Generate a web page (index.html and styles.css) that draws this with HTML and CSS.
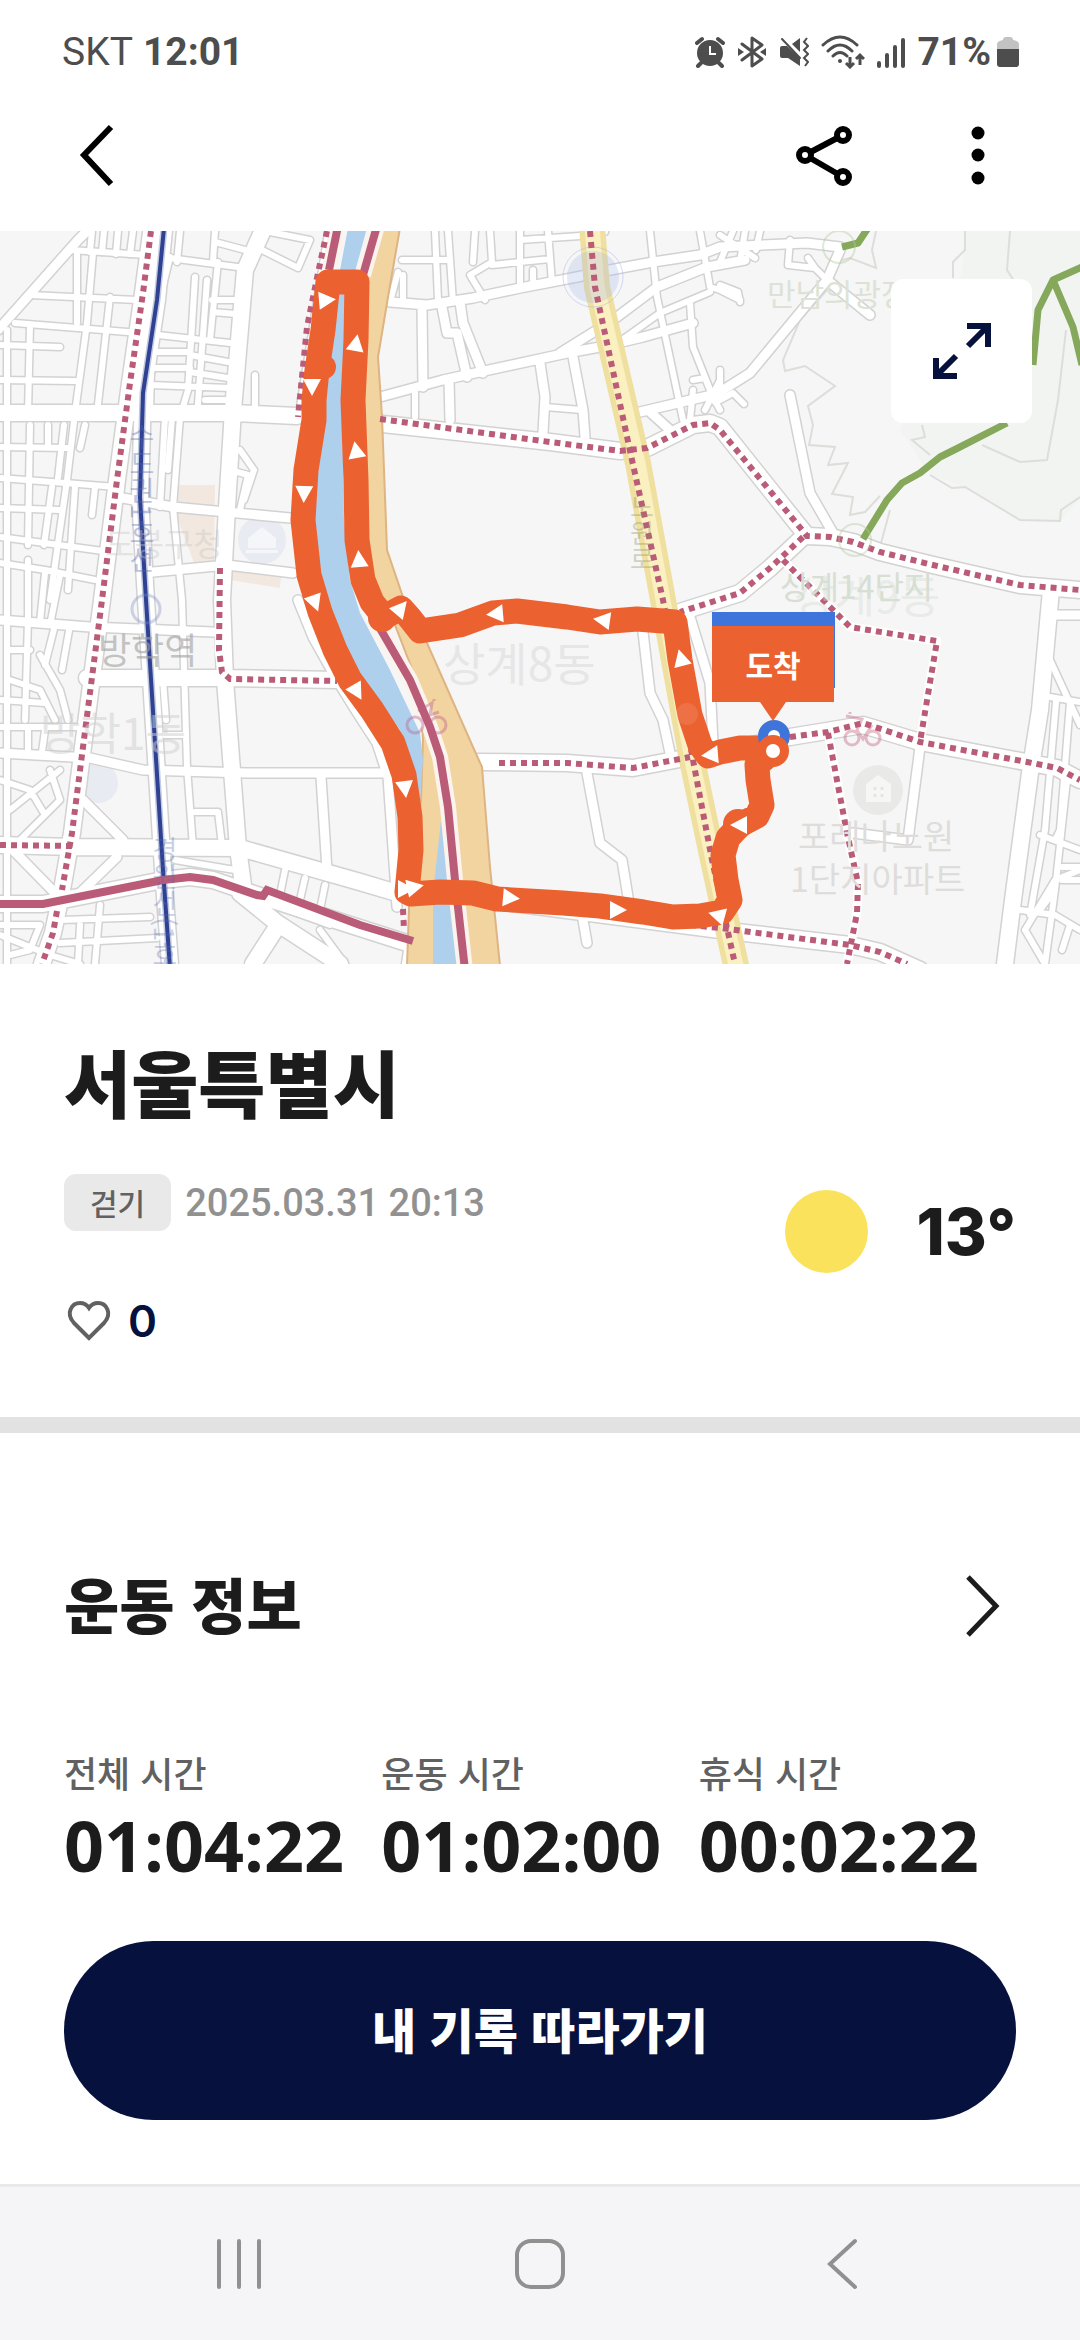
FILE: index.html
```html
<!DOCTYPE html>
<html lang="ko">
<head>
<meta charset="utf-8">
<meta name="viewport" content="width=device-width, initial-scale=1">
<title>서울특별시</title>
<link rel="stylesheet" href="styles.css">
</head>
<body>
<div class="screen">
  <div class="status-bar">
    <div class="status-left"><span class="carrier">SKT</span><span class="clock">12:01</span></div>
    <div class="status-right">
      <svg class="status-icon" width="30" height="32" viewBox="0 0 30 32" aria-label="알람">
        <circle cx="15" cy="17" r="13" fill="#4d4d4d"/>
        <path d="M2 7L7 3M28 7L23 3M6 27L3 30M24 27L27 30" stroke="#4d4d4d" stroke-width="4" stroke-linecap="round"/>
        <path d="M15 10V18H21" fill="none" stroke="#fff" stroke-width="2"/>
      </svg>
      <svg class="status-icon" width="30" height="32" viewBox="0 0 30 32" aria-label="블루투스">
        <path d="M5 8L25 23L15 30V2L25 9L5 24" fill="none" stroke="#4d4d4d" stroke-width="3" stroke-linejoin="round" stroke-linecap="round"/>
        <path d="M1 12L7 16L1 20ZM29 12L23 16L29 20Z" fill="#4d4d4d"/>
      </svg>
      <svg class="status-icon" width="30" height="32" viewBox="0 0 30 32" aria-label="진동">
        <path d="M1 12Q1 10 3 10H8L21 22V30L9 22H3Q1 22 1 20ZM13 8L21 2V16Z" fill="#4d4d4d"/>
        <path d="M3 3L21 22" stroke="#4d4d4d" stroke-width="2" stroke-linecap="round"/>
        <path d="M28 2L25 6L29 10L25 14L29 18L25 22L29 26L26 30" fill="none" stroke="#4d4d4d" stroke-width="2"/>
      </svg>
      <svg class="status-icon" width="44" height="34" viewBox="0 0 44 34" aria-label="와이파이">
        <path d="M2 10Q19 -6 36 10M7 16Q19 4 31 16M12 21Q19 14 26 21" fill="none" stroke="#4d4d4d" stroke-width="3" stroke-linecap="round"/>
        <circle cx="19" cy="26" r="2" fill="#4d4d4d"/>
        <path d="M29 22V32M25 28L29 32L33 28M39 30V20M35 24L39 20L43 24" fill="none" stroke="#4d4d4d" stroke-width="3"/>
      </svg>
      <svg class="status-icon" width="28" height="32" viewBox="0 0 28 32" aria-label="신호 세기">
        <path d="M2 27V30M10 19V30M18 11V30M26 4V30" stroke="#4d4d4d" stroke-width="4" stroke-linecap="round"/>
      </svg>
      <span class="battery-level">71%</span>
      <svg class="battery-icon" width="22" height="30" viewBox="0 0 22 30" aria-label="배터리">
        <path d="M6 3Q6 0 9 0H13Q16 0 16 3Q22 4 22 7V12H0V7Q0 4 6 3Z" fill="#c2c2c2"/>
        <path d="M0 12H22V27Q22 30 19 30H3Q0 30 0 27Z" fill="#4d4d4d"/>
      </svg>
    </div>
  </div>

  <header class="app-bar">
    <button class="icon-button" type="button" aria-label="뒤로">
      <svg width="64" height="64" viewBox="0 0 64 64"><path d="M47 4L20 32L47 61" fill="none" stroke="#000" stroke-width="6"/></svg>
    </button>
    <div class="app-actions">
      <button class="icon-button" type="button" aria-label="공유">
        <svg width="64" height="64" viewBox="0 0 64 64" fill="#fff" stroke="#000" stroke-width="6"><path d="M13 32L51 12M13 32L51 54"/><circle cx="13" cy="32" r="6"/><circle cx="51" cy="12" r="6"/><circle cx="51" cy="54" r="6"/></svg>
      </button>
      <button class="icon-button" type="button" aria-label="더보기">
        <svg width="64" height="64" viewBox="0 0 64 64"><circle cx="32" cy="10" r="6.500"/><circle cx="32" cy="32" r="6.500"/><circle cx="32" cy="55" r="6.500"/></svg>
      </button>
    </div>
  </header>

  <main>
    <section class="map" aria-label="이동 경로 지도">
      <svg class="map-canvas" viewBox="0 231 1080 733" preserveAspectRatio="xMidYMid slice">
        <defs>
          <g id="lanes">
            <path d="M0 345L60 347M15 323L140 333L230 343M30 295L137 300M70 250L147 255L245 268M0 380L75 381M0 447L67 448M0 478L117 487M0 508L60 510M0 537L103 551M0 563L45 570L95 580M0 700L45 703M0 727L80 727M0 752L60 756"/>
            <path d="M7 330V964M77 253L77 323M93 253L87 323L75 413L67 480L50 600M110 297L97 413M30 325L28 413M30 425L28 545M48 425V447M64 425L58 478M85 425L80 448M52 487L44 545M75 487L68 590M95 487L92 515M28 560V620M45 573L40 622M60 575L50 625"/>
            <path d="M195 277L188 390L180 417L173 507L182 600L187 767L193 847M207 280L197 417M218 262L210 340M170 257L152 330L150 413M152 352H190M152 368H190M190 355L228 362M190 372L228 378M150 385L230 388M205 400H226M165 417L160 507M172 417L168 470M92 231L90 252M104 231L102 252M118 231L116 254M133 231L130 254M180 231L177 262M215 231L213 262M215 242L245 250M212 300H238M213 312L236 314"/>
            <path d="M265 231L310 240L298 268L262 250M232 413L230 470L248 475L240 510M240 450L254 470L244 500M255 375V413M28 620L25 720M40 655L60 690L68 720M10 680L40 690L55 720M55 625L45 665M70 625L62 670M10 650H30M28 730V752M45 730L42 752M0 780L30 790L45 815L20 840M10 810L60 770M30 830L60 800L50 770"/>
            <path d="M165 735H182M163 680L166 720M195 812H218L222 845M175 860L235 870M285 870L280 895M305 878L300 900M325 885L320 910M0 925H40L30 950L10 955M60 943L157 938M62 920L150 917M100 905L95 964M80 925L78 964M0 935L50 955L80 964M320 930L345 964M275 905L330 925"/>
            <path d="M402 260H447M435 231L438 300M448 231L453 302M398 272L390 302M403 275V302M475 231L473 262M490 231L492 262L470 275L485 300M520 231V287M548 231L552 283M492 265L550 259M520 240L580 236M533 280V270M600 231L605 232"/>
            <path d="M650 231L657 297L683 420M700 231L710 287L720 290L740 300M622 340L660 313L710 292M690 303L693 347L713 397L720 410M693 390L690 420M693 380L705 378L715 402M720 380L705 410M733 231L720 262M745 231L740 262M760 231L756 250M720 235L755 258M790 240L788 265L815 268L827 280M808 258L815 268M720 285L738 292L740 302M720 370V400M720 400L733 393L744 404"/>
            <path d="M415 393V417M545 407L582 410M1050 660L1080 725M1050 697L1080 702M1056 702L1045 830L1030 915M1070 702L1060 830L1055 840M1067 780L1055 890L1040 910M1040 835L1080 850M1020 910L1055 915M1025 930L1045 964M1080 870L1055 880L1025 930M1062 867H1080M1062 880H1080M1055 890L1045 964M1055 915L1080 930M1070 925L1062 950"/>
          </g>
          <g id="streets">
            <path d="M-2 330L78 240L90 228M117 497L173 507L290 518M153 572L227 565L293 573M0 620L90 627L213 632M0 753L90 758L143 770L247 773L387 773M83 800L123 840M10 847L55 893M80 893L117 857M298 600L313 637L337 680L360 717L377 743L388 777L395 877L397 907M321 777L327 870M228 507L227 565M330 230L300 416"/>
            <path d="M380 397L443 380L567 353L600 347L643 337L693 323M390 302L427 305L473 298L520 288L577 277L610 270L653 262L700 255L720 247L807 243L840 247M422 307L423 387M442 307L447 333L457 333L467 377M460 302L463 323L483 373M540 363L545 397L543 433M573 357L583 410L585 437M449 380L450 420M560 353L613 320L657 287L707 267L745 260M640 412L720 393M650 412L670 430M712 397L750 373L827 280L840 250M827 280L870 315M790 395L810 493L833 533M643 632L650 693L663 720L670 753M690 617L710 683L713 743M587 773L600 843L622 860L628 897M583 920L587 943M920 747L908 840L853 833M1056 615H1080"/>
          </g>
          <g id="avenues">
            <path d="M263 230L245 270L233 410L227 507L222 600L225 680L238 848L243 885M0 413L233 413L297 416M87 678L227 678L337 680M0 845L73 847L240 848L360 882L397 893M164 230L157 300L143 393L140 497L146 600L163 870L170 964M151 233L143 293L130 383L117 480L102 600L83 747L72 833L62 890L53 933L42 964M240 893L277 923L340 964M277 927L253 964M0 904L43 904L163 880L190 877L213 880L257 895L413 945L410 964"/>
            <path d="M383 424L550 442L620 451L647 448L693 425L710 423L720 427L807 536L830 537L853 542L880 552L933 565L1020 585L1080 590M803 537L770 568L740 593L680 612M478 762L567 763L633 768L690 757L720 752L790 737L863 725L920 742L1057 768L1080 780M497 901L720 930L850 945L880 952L920 970M1051 590L1040 710L1030 773L1013 900L1005 964"/>
          </g>
          <path id="arrow" d="M-8 -9L9 0L-8 9Z"/>
        </defs>

        <rect class="land" y="231" width="1080" height="733"/>
        <path class="hill" d="M965 231L962 270L940 350L900 430L930 475L965 487L995 505L1020 520L1060 521L1080 500V231Z"/>
        <path class="contour" d="M965 231V250L953 262V278M1010 231L1007 270L1020 290M876 231L872 250L876 268L850 258L835 262M827 290L800 320L783 360L785 371L805 366L835 386L808 406L813 425L809 445L835 447L828 465L848 463L832 494L853 497L850 515L865 512L880 496M890 510L881 543M922 425L925 437L912 440L930 455M930 475L952 488L965 487L995 505L1020 520L1060 521L1061 510L1080 497M1066 330L1058 400L1047 460L1020 462L982 445"/>
        <path class="sand-faint" d="M178 485H215L214 560L195 566L178 520ZM235 490L232 565L281 576L280 588L230 580Z"/>
        <circle class="poi-blue" cx="262" cy="540" r="24"/>
        <circle class="poi-blue" cx="98" cy="783" r="20"/>

        <use href="#lanes" class="lane-edge"/>
        <use href="#streets" class="street-edge"/>
        <use href="#avenues" class="avenue-edge"/>
        <use href="#lanes" class="lane"/>
        <use href="#streets" class="street"/>
        <use href="#avenues" class="avenue"/>
        <path class="street" d="M783 560L823 600L850 627L937 641L920 742M828 733L847 833L858 883L857 913L847 964M220 570L219 650L222 672"/>

        <path class="yellow-edge" d="M592 226L597 287L638 463L663 600L692 760L713 860L737 970"/>
        <path class="yellow-core" d="M592 226L597 287L638 463L663 600L692 760L713 860L737 970"/>
        <circle cx="593" cy="277" r="26" fill="#a9b8e8" opacity=".3"/>
        <circle cx="593" cy="277" r="30" fill="none" stroke="#a9b8e8" stroke-width="1" opacity=".5"/>

        <path class="bank" d="M376 228L362 280V560L375 600L395 625L420 690L423 740L421 800L410 880L407 966H500L490 867L482 767L473 747L427 643L403 597L387 550L382 417L378 357L388 297L400 228Z"/>
        <path class="river" d="M348 228L340 270L330 360L324 420L315 490V530L325 600L333 627L360 675L400 730L420 800L423 760L420 733L390 670L360 613L350 580L344 520L342 400L350 290L367 228ZM441 820L433 893V966H458L450 900Z"/>
        <path class="path-halo" d="M377 226L363 275M338 226L329 270M378 625L410 680L430 727L440 757L448 807L455 880L465 970"/>
        <path class="rail-halo" d="M164 228L157 300L143 393L140 497L146 600L163 870L170 968"/>
        <path class="rail" d="M164 228L157 300L143 393L140 497L146 600L163 870L170 968"/>
        <path class="cycle" d="M377 226L363 275M338 226L329 270M378 625L410 680L430 727L440 757L448 807L455 880L465 970M0 904H43L163 880L190 877L213 880L257 895L263 896L267 890L360 925L413 941"/>
        <path class="trail" d="M151 231L143 293L130 383L117 480L102 600L83 747L72 833L62 890M57 911L53 933L42 964M327 231L318 273L307 327L298 417M220 568L219 650L222 672L230 679L337 681M0 845L72 846M403 909L404 930"/>
        <path class="trail" d="M380 419L550 442L620 451L647 448L693 425L710 423L720 430L807 536L830 537L853 542L880 552L933 565L1020 585L1080 590M803 537L770 568L740 593L680 612M783 560L823 600L850 627L937 641L920 742"/>
        <path class="trail" d="M499 763L567 763L633 768L690 757M790 737L828 732L863 723L920 742L1027 762L1057 768L1080 780M828 733L847 833L858 883L857 913L847 964M690 925L720 928L850 945L880 952L907 964M590 231L595 287L632 460L663 600L693 760L712 860L735 964"/>
        <path class="hike" d="M842 247L858 243L868 228M1084 266L1053 280L1038 310L1033 365M1053 280L1073 327L1082 365M863 539L887 500L902 483L920 473L940 457L958 448L1007 423"/>
        <circle cx="839" cy="247" r="16" class="ring-green"/>
        <circle cx="855" cy="540" r="16" class="ring-green"/>
        <circle cx="146" cy="609" r="14" fill="none" stroke="#7c8cc0" stroke-width="3" opacity=".35"/>

        <g class="map-text">
          <text x="98" y="664" font-size="36" fill="#a0a0a0" opacity=".6">방학역</text>
          <text x="40" y="750" font-size="44" fill="#cfcfcf" opacity=".5">방학1동</text>
          <text x="443" y="681" font-size="46" fill="#e6e6e6">상계8동</text>
          <text x="767" y="306" font-size="31" fill="#dce3d6">만남의광장</text>
          <text x="780" y="599" font-size="32" fill="#d7ded2">상계14단지</text>
          <text x="794" y="613" font-size="44" fill="#d8ded6" opacity=".45">상계9동</text>
          <text x="798" y="849" font-size="34" fill="#dfdddb">포레나노원</text>
          <text x="790" y="892" font-size="34" fill="#dfdddb">1단지아파트</text>
          <text x="105" y="556" font-size="32" fill="#c8c8c8" opacity=".4">도봉구청</text>
          <text x="142" y="423" font-size="27" fill="#5367ae" opacity=".38" writing-mode="vertical-rl">수도권1호선</text>
          <text x="165" y="836" font-size="27" fill="#5367ae" opacity=".3" writing-mode="vertical-rl">경원선(1호</text>
          <text x="642" y="494" font-size="26" fill="#8b9160" opacity=".35" writing-mode="vertical-rl">노원로</text>
        </g>
        <path d="M248 548V538L262 527L276 538V548ZM246 550H278V553H246Z" fill="#fff" opacity=".55"/>
        <circle cx="878" cy="790" r="25" fill="#e9e9e7"/>
        <path d="M866 802V784L878 775L891 784V802Z" fill="#f6f6f4"/>
        <path d="M875 787V790M882 787V790M875 794V797M882 794V797" stroke="#e4e4e2" stroke-width="3"/>
        <g fill="none" stroke="#b95f8c" stroke-width="3" opacity=".4">
          <circle cx="415" cy="725" r="8"/><circle cx="438" cy="725" r="8"/><path d="M418 711L432 703L430 715L439 712M434 699V701"/>
        </g>
        <g fill="none" stroke="#c1607f" stroke-width="3" opacity=".4">
          <circle cx="852" cy="738" r="7"/><circle cx="873" cy="738" r="7"/><path d="M846 716L862 719L857 730L863 739L872 725M850 712V714"/>
        </g>

        <path class="route" d="M772 752L757 748L740 748L720 752L708 756L700 745L690 715L680 660L675 622L663 621L637 619L600 622L567 617L517 611L493 613L460 625L420 631L409 617L401 608L384 617L372 602L363 580L357 540L356 480L353 400L356 340L357 282H328L323 330L317 370L314 400L314 420L306 470L303 520L309 575L320 612L335 650L350 680L372 710L393 743L404 775L410 817L411 850L407 892L411 894L440 892L473 893L497 899L563 903L600 906L643 912L673 917L700 916L722 912L730 900L726 880L723 855L728 838L740 825L757 816L762 805L758 780L757 765L772 752"/>
        <circle class="route-dot" cx="324" cy="367" r="12"/>
        <circle class="route-dot" cx="738" cy="824" r="15"/>
        <circle class="route-dot" cx="382" cy="618" r="14"/>
        <circle cx="687" cy="714" r="11" fill="#fff" opacity=".1"/>
        <g fill="#fff">
          <use href="#arrow" transform="translate(327 300) rotate(-5)"/>
          <use href="#arrow" transform="translate(356 343) rotate(-80)"/>
          <use href="#arrow" transform="translate(312 387) rotate(90)"/>
          <use href="#arrow" transform="translate(356 450) rotate(-100)"/>
          <use href="#arrow" transform="translate(304 494) rotate(92)"/>
          <use href="#arrow" transform="translate(359 559) rotate(-95)"/>
          <use href="#arrow" transform="translate(315 603) rotate(70)"/>
          <use href="#arrow" transform="translate(357 692) rotate(60)"/>
          <use href="#arrow" transform="translate(405 789) rotate(83)"/>
          <use href="#arrow" transform="translate(406 889) rotate(0)"/>
          <use href="#arrow" transform="translate(415 887) rotate(-12)"/>
          <use href="#arrow" transform="translate(511 898) rotate(5)"/>
          <use href="#arrow" transform="translate(618 910) rotate(0)"/>
          <use href="#arrow" transform="translate(717 915) rotate(195)"/>
          <use href="#arrow" transform="translate(710 755) rotate(175)"/>
          <use href="#arrow" transform="translate(739 825) rotate(180)"/>
          <use href="#arrow" transform="translate(681 658) rotate(-105)"/>
          <use href="#arrow" transform="translate(602 620) rotate(188)"/>
          <use href="#arrow" transform="translate(495 614) rotate(175)"/>
          <use href="#arrow" transform="translate(401 608) rotate(-50)"/>
        </g>
        <circle cx="774" cy="736" r="11" fill="#fff" stroke="#3f74da" stroke-width="10"/>
        <circle cx="773" cy="751" r="16" fill="#ec6130"/>
        <circle cx="773" cy="751" r="7" fill="#fff"/>
        <path d="M712 612H835V688H712Z" fill="#3f74da"/>
        <path d="M712 626H834V702H786L773 721L760 702H712Z" fill="#ec6130"/>
        <text class="pin-text" x="773" y="677" text-anchor="middle">도착</text>
      </svg>
      <button class="expand-button" type="button" aria-label="지도 확대">
        <svg width="60" height="60" viewBox="0 0 60 60" fill="none" stroke="#06123d" stroke-width="6"><path d="M35 5H56V26M56 5L36 25M4 37V55H25M4 55L24 35"/></svg>
      </button>
    </section>

    <section class="summary">
      <h1 class="place">서울특별시</h1>
      <div class="summary-body">
        <div>
          <div class="meta"><span class="chip">걷기</span><time class="date" datetime="2025-03-31T20:13">2025.03.31 20:13</time></div>
          <button class="likes" type="button" aria-label="좋아요 0">
            <svg width="50" height="50" viewBox="0 0 50 50"><path d="M25 42L10 27C1 17 8 7 16 7C20 7 23 9 25 12C27 9 30 7 34 7C42 7 49 17 40 27Z" fill="none" stroke="#616161" stroke-width="4"/></svg>
            <span>0</span>
          </button>
        </div>
        <div class="weather"><span class="sun"></span><span class="temp">13°</span></div>
      </div>
    </section>

    <section class="workout">
      <a class="section-link" href="#workout">
        <h2 class="section-title">운동 정보</h2>
        <svg width="50" height="64" viewBox="0 0 50 64"><path d="M2 3L30 32L2 61" fill="none" stroke="#1c1c1c" stroke-width="5"/></svg>
      </a>
      <dl class="times">
        <div><dt>전체 시간</dt><dd>01:04:22</dd></div>
        <div><dt>운동 시간</dt><dd>01:02:00</dd></div>
        <div><dt>휴식 시간</dt><dd>00:02:22</dd></div>
      </dl>
      <button class="follow-button" type="button">내 기록 따라가기</button>
    </section>
  </main>

  <nav class="system-nav" aria-label="시스템">
    <button class="nav-button" type="button" aria-label="최근 앱"><svg width="56" height="56" viewBox="0 0 56 56"><path d="M8 5V51M28 5V51M48 5V51" stroke="#909090" stroke-width="4" stroke-linecap="round"/></svg></button>
    <button class="nav-button" type="button" aria-label="홈"><svg width="56" height="56" viewBox="0 0 56 56"><rect x="5" y="5" width="46" height="46" rx="14" fill="none" stroke="#909090" stroke-width="4"/></svg></button>
    <button class="nav-button" type="button" aria-label="뒤로"><svg width="56" height="56" viewBox="0 0 56 56"><path d="M42 5L17 28L42 51" fill="none" stroke="#909090" stroke-width="4" stroke-linecap="round"/></svg></button>
  </nav>
</div>
</body>
</html>
```
FILE: styles.css
```css
* {
  box-sizing: border-box;
}

body {
  margin: 0;
  background: #fff;
  color: #1c1c1c;
  font-family: "Noto Sans CJK KR", sans-serif;
}

button {
  margin: 0;
  padding: 0;
  border: 0;
  background: none;
  color: inherit;
  font: inherit;
}

svg {
  display: block;
}

h1, h2, dl, dd {
  margin: 0;
}

.screen {
  display: flex;
  flex-direction: column;
  min-height: 100vh;
}

main {
  flex: 1;
}

/* status bar */
.status-bar {
  display: flex;
  justify-content: space-between;
  align-items: center;
  height: 78px;
  padding: 26px 61px 0 62px;
  color: #4d4d4d;
  font-family: Roboto, sans-serif;
  font-size: 39px;
  line-height: 48px;
}

.status-left {
  display: flex;
  gap: 10px;
}

.carrier {
  font-weight: 400;
}

.clock, .battery-level {
  font-weight: 700;
}

.status-right {
  display: flex;
  align-items: center;
  gap: 12px;
}

.battery-icon {
  margin-left: -6px;
}

/* app bar */
.app-bar {
  display: flex;
  justify-content: space-between;
  align-items: center;
  height: 153px;
  padding: 0 70px 0 64px;
}

.app-actions {
  display: flex;
  gap: 90px;
}

/* map */
.map {
  position: relative;
}

.map-canvas {
  width: 100%;
  aspect-ratio: 1080 / 733;
}

.land { fill: #f6f6f6; }
.hill { fill: #f2f4f2; }
.contour { fill: none; stroke: #dcdeda; stroke-width: 2; }
.sand-faint { fill: #f2e8df; }
.poi-blue { fill: #e9ebf2; }

.lane, .lane-edge, .street, .street-edge, .avenue, .avenue-edge {
  fill: none;
  stroke-linecap: round;
  stroke-linejoin: round;
}

.lane-edge, .street-edge, .avenue-edge { stroke: #d2d2d2; }
.lane, .street, .avenue { stroke: #fff; }
.lane-edge { stroke-width: 9; }
.lane { stroke-width: 6; }
.street-edge { stroke-width: 12; }
.street { stroke-width: 9; }
.avenue-edge { stroke-width: 19; }
.avenue { stroke-width: 16; }

.yellow-edge { fill: none; stroke: #efe0a0; stroke-width: 26; }
.yellow-core { fill: none; stroke: #faf0c0; stroke-width: 15; }
.bank { fill: #f2d4a0; stroke: #dfb483; stroke-width: 2; }
.river { fill: #aed0ed; }
.path-halo { fill: none; stroke: #fbf3ee; stroke-width: 16; }
.rail-halo { fill: none; stroke: #c3c9df; stroke-width: 7; }
.rail { fill: none; stroke: #2e4192; stroke-width: 4; }
.cycle { fill: none; stroke: #ba5b78; stroke-width: 8; }
.trail { fill: none; stroke: #ba5b78; stroke-width: 6; stroke-dasharray: 6 5; }
.hike { fill: none; stroke: #85a85b; stroke-width: 7; stroke-linejoin: round; }
.ring-green { fill: none; stroke: #b4c8a0; stroke-width: 2; opacity: .4; }

.route {
  fill: none;
  stroke: #ec6130;
  stroke-width: 25;
  stroke-linejoin: round;
  stroke-linecap: round;
}

.route-dot { fill: #ec6130; }

.map-text {
  font-family: "Noto Sans CJK KR", sans-serif;
}

.pin-text {
  fill: #fff;
  font-size: 30px;
  font-weight: 700;
}

.expand-button {
  position: absolute;
  top: 48px;
  right: 48px;
  display: grid;
  place-items: center;
  width: 141px;
  height: 144px;
  border-radius: 12px;
  background: #fff;
}

/* summary */
.summary {
  padding: 68px 64px 71px;
  border-bottom: 16px solid #e2e2e2;
}

.place {
  font-size: 73px;
  font-weight: 900;
  line-height: 96px;
}

.summary-body {
  display: flex;
  justify-content: space-between;
  margin-top: 46px;
}

.meta {
  display: flex;
  align-items: center;
  gap: 14px;
}

.chip {
  padding: 0 26px;
  border-radius: 12px;
  background: #e9e9e9;
  color: #616161;
  font-size: 30px;
  font-weight: 500;
  line-height: 57px;
}

.date {
  color: #919191;
  font-family: Roboto, sans-serif;
  font-size: 38px;
  font-weight: 500;
}

.likes {
  display: flex;
  align-items: center;
  gap: 14px;
  margin-top: 65px;
  color: #06123d;
  font-family: Inter, sans-serif;
  font-size: 44px;
  font-weight: 600;
  line-height: 50px;
}

.weather {
  display: flex;
  align-items: center;
  align-self: flex-start;
  gap: 48px;
  padding-top: 16px;
}

.sun {
  width: 83px;
  height: 83px;
  border-radius: 50%;
  background: #fbe25c;
}

.temp {
  font-family: Inter, sans-serif;
  font-size: 64px;
  font-weight: 800;
  line-height: 80px;
}

/* workout */
.workout {
  padding: 130px 64px 64px;
}

.section-link {
  display: flex;
  justify-content: space-between;
  align-items: center;
  color: inherit;
  text-decoration: none;
}

.section-title {
  padding-bottom: 6px;
  font-size: 60px;
  font-weight: 900;
  line-height: 80px;
}

.times {
  display: grid;
  grid-template-columns: repeat(3, 1fr);
  margin-top: 99px;
}

.times dt {
  color: #616161;
  font-size: 36px;
  font-weight: 500;
  line-height: 48px;
}

.times dd {
  margin-top: 9px;
  font-family: "Open Sans", sans-serif;
  font-size: 70px;
  font-weight: 700;
  line-height: 80px;
}

.follow-button {
  width: 100%;
  height: 179px;
  margin-top: 56px;
  padding-bottom: 6px;
  border-radius: 90px;
  background: #06123d;
  color: #fff;
  font-size: 48px;
  font-weight: 900;
}

/* system navigation */
.system-nav {
  display: flex;
  justify-content: space-around;
  align-items: center;
  height: 156px;
  padding: 0 88px;
  border-top: 3px solid #e9e9e9;
  background: #f5f5f8;
}
```
